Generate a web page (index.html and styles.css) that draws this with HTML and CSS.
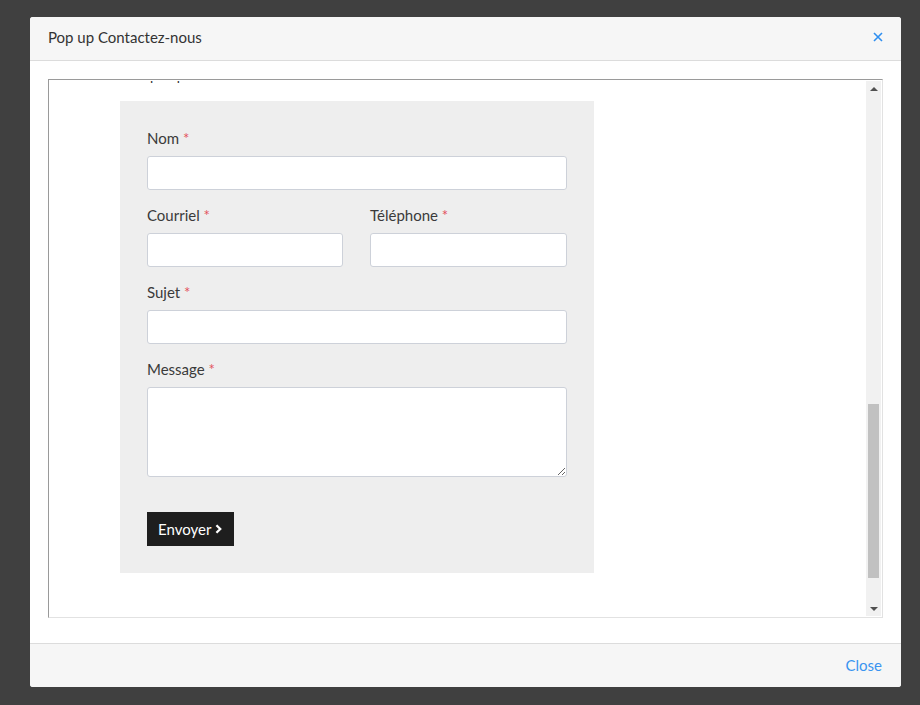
FILE: index.html
```html
<!DOCTYPE html>
<html lang="fr">
<head>
<meta charset="utf-8">
<title>Pop up Contactez-nous</title>
<link rel="stylesheet" href="styles.css">
</head>
<body>
<div class="modal">
  <div class="modal-header">
    <span class="modal-title">Pop up Contactez-nous</span>
    <button class="close-x" aria-label="Fermer">
      <svg width="10" height="10" viewBox="0 0 10 10"><path d="M1 1L9 9M9 1L1 9" stroke="#2f8ff0" stroke-width="1.6" fill="none"/></svg>
    </button>
  </div>
  <div class="modal-body">
    <div class="frame">
      <div class="viewport">
        <div class="peek"><span>p</span><span class="p2">p</span></div>
        <form class="form-box">
          <div class="field">
            <label>Nom <span class="req">*</span></label>
            <input type="text">
          </div>
          <div class="row">
            <div class="field">
              <label>Courriel <span class="req">*</span></label>
              <input type="text">
            </div>
            <div class="field">
              <label>Téléphone <span class="req">*</span></label>
              <input type="text">
            </div>
          </div>
          <div class="field">
            <label>Sujet <span class="req">*</span></label>
            <input type="text">
          </div>
          <div class="field field-last">
            <label>Message <span class="req">*</span></label>
            <textarea></textarea>
          </div>
          <button type="button" class="send">Envoyer <svg width="8" height="10" viewBox="0 0 8 10"><path d="M1.5 1L5.5 5L1.5 9" stroke="#fff" stroke-width="2.4" fill="none"/></svg></button>
        </form>
      </div>
      <div class="scrollbar">
        <div class="arrow up"></div>
        <div class="track"><div class="thumb"></div></div>
        <div class="arrow down"></div>
      </div>
    </div>
  </div>
  <div class="modal-footer">
    <a class="close-link" href="#">Close</a>
  </div>
</div>
</body>
</html>
```
FILE: styles.css
```css
html, body {
  margin: 0;
  height: 100%;
}
body {
  background: #404040;
  padding: 17px 19px 0 30px;
  box-sizing: border-box;
  font-family: Lato, "Noto Sans", sans-serif;
  color: #333;
}
.modal {
  width: 871px;
  height: 670px;
  background: #fff;
  border-radius: 3px;
  display: flex;
  flex-direction: column;
  overflow: hidden;
}
.modal-header {
  height: 44px;
  flex: none;
  box-sizing: border-box;
  background: #f6f6f6;
  border-bottom: 1px solid #dcdcdc;
  display: flex;
  align-items: center;
  justify-content: space-between;
  padding: 0 17px 3px 18px;
}
.modal-title {
  font-size: 15px;
  color: #333;
}
.close-x {
  border: 0;
  background: none;
  padding: 0;
  width: 12px;
  height: 12px;
  display: flex;
  align-items: center;
  justify-content: center;
}
.modal-body {
  flex: 1;
  padding: 18px 18px 0 18px;
}
.frame {
  height: 535px;
  border-top: 1px solid #9a9a9a;
  border-left: 1px solid #9a9a9a;
  border-right: 1px solid #e2e2e2;
  border-bottom: 1px solid #e2e2e2;
  padding: 1px;
  display: flex;
}
.viewport {
  flex: 1;
  overflow: hidden;
}
.peek {
  height: 20px;
  margin-top: -15px;
  line-height: 20px;
  font-size: 14px;
  padding-left: 100px;
  display: flex;
  color: #333;
}
.peek .p2 {
  margin-left: 19px;
}
.form-box {
  margin: 15px 0 0 70px;
  width: 474px;
  box-sizing: border-box;
  background: #eeeeee;
  padding: 26px 27px 27px 27px;
}
.field {
  display: flex;
  flex-direction: column;
  margin-bottom: 14px;
}
.row {
  display: grid;
  grid-template-columns: 196px 197px;
  column-gap: 27px;
}
label {
  font-size: 15px;
  line-height: 22px;
  margin-bottom: 7px;
  color: #3a3a3a;
}
.req {
  color: #e3515b;
}
input, textarea {
  box-sizing: border-box;
  height: 34px;
  border: 1px solid #cdd1d9;
  border-radius: 3px;
  background: #fff;
  margin: 0;
  font-family: inherit;
}
textarea {
  height: 90px;
  resize: vertical;
}
.field-last {
  margin-bottom: 35px;
}
.send {
  height: 34px;
  width: 87px;
  background: #1e1e1e;
  color: #fff;
  border: 0;
  border-radius: 0;
  font-family: inherit;
  font-size: 15px;
  padding: 0 11px;
  display: flex;
  align-items: center;
  gap: 4px;
}
.scrollbar {
  width: 15px;
  background: #f1f1f1;
  display: flex;
  flex-direction: column;
}
.arrow {
  height: 15px;
  display: flex;
  align-items: center;
  justify-content: center;
}
.arrow.up::after, .arrow.down::after {
  content: "";
  width: 0;
  height: 0;
  border-left: 4px solid transparent;
  border-right: 4px solid transparent;
}
.arrow.up::after {
  border-bottom: 4px solid #505050;
}
.arrow.down::after {
  border-top: 4px solid #505050;
}
.track {
  flex: 1;
}
.thumb {
  margin: 308px 2px 0 2px;
  height: 174px;
  background: #c1c1c1;
}
.modal-footer {
  height: 44px;
  flex: none;
  box-sizing: border-box;
  background: #f6f6f6;
  border-top: 1px solid #dcdcdc;
  display: flex;
  align-items: center;
  justify-content: flex-end;
  padding: 0 19px 2px 19px;
}
.close-link {
  color: #3a94f0;
  text-decoration: none;
  font-size: 15px;
}
```
